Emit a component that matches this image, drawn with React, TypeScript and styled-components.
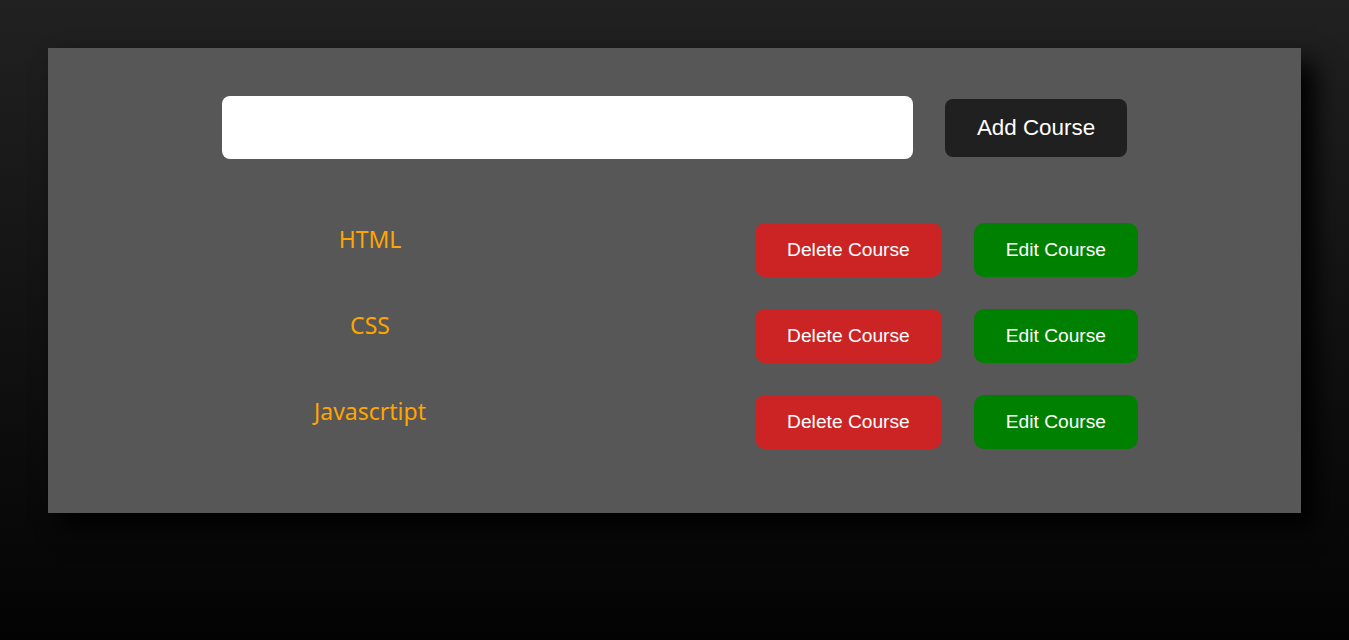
import React, { useState } from 'react';
import styled, { createGlobalStyle } from 'styled-components';

const GlobalStyle = createGlobalStyle`
  * {
    box-sizing: border-box;
  }

  html, body {
    margin: 0;
    padding: 0;
  }

  body {
    min-height: 100vh;
    background: linear-gradient(#212121, #030303);
    font-family: "Liberation Sans", Arial, sans-serif;
  }
`;

const Page = styled.div`
  min-height: 100vh;
  padding: 48px;
`;

const Panel = styled.main`
  background: #575757;
  padding: 48px 0 64px;
  box-shadow: 14px 14px 24px #000;
`;

const AddBar = styled.form`
  display: flex;
  justify-content: center;
  align-items: center;
  gap: 32px;
  margin-bottom: 64px;
`;

const CourseInput = styled.input`
  width: 691px;
  height: 63px;
  border: none;
  border-radius: 8px;
  background: #fff;
  padding: 0 16px;
  font-size: 20px;
  font-family: "Liberation Sans", Arial, sans-serif;

  &:focus {
    outline: none;
  }
`;

const Button = styled.button<{ $tone: 'dark' | 'red' | 'green'; $large?: boolean }>`
  border: none;
  color: #fff;
  cursor: pointer;
  font-family: "Liberation Sans", Arial, sans-serif;
  font-size: ${p => (p.$large ? '22.4px' : '19.2px')};
  padding: 16px 32px;
  border-radius: ${p => (p.$large ? '8px' : '10px')};
  background: ${p => (p.$tone === 'dark' ? '#202020' : p.$tone === 'red' ? '#cc2424' : '#008000')};
`;

const CourseList = styled.ul`
  list-style: none;
  margin: 0;
  padding: 0;
  display: flex;
  flex-direction: column;
  gap: 32px;
`;

const CourseRow = styled.li`
  display: grid;
  grid-template-columns: 296px 1fr auto auto;
  column-gap: 32px;
  align-items: start;
  width: 916px;
  margin-left: 174px;
`;

const CourseName = styled.span`
  grid-column: 1;
  text-align: center;
  color: #ffa500;
  font-family: "Noto Sans", "Open Sans", sans-serif;
  font-size: 23px;
  line-height: 32px;
`;

const Spacer = styled.span``;

const App: React.FC = () => {
  const [courses] = useState(['HTML', 'CSS', 'Javascrtipt']);
  const [value, setValue] = useState('');

  return (
    <>
      <GlobalStyle />
      <Page>
        <Panel>
          <AddBar onSubmit={e => e.preventDefault()}>
            <CourseInput value={value} onChange={e => setValue(e.target.value)} />
            <Button $tone="dark" $large type="submit">Add Course</Button>
          </AddBar>

          <CourseList>
            {courses.map(course => (
              <CourseRow key={course}>
                <CourseName>{course}</CourseName>
                <Spacer />
                <Button $tone="red">Delete Course</Button>
                <Button $tone="green">Edit Course</Button>
              </CourseRow>
            ))}
          </CourseList>
        </Panel>
      </Page>
    </>
  );
};

export default App;
